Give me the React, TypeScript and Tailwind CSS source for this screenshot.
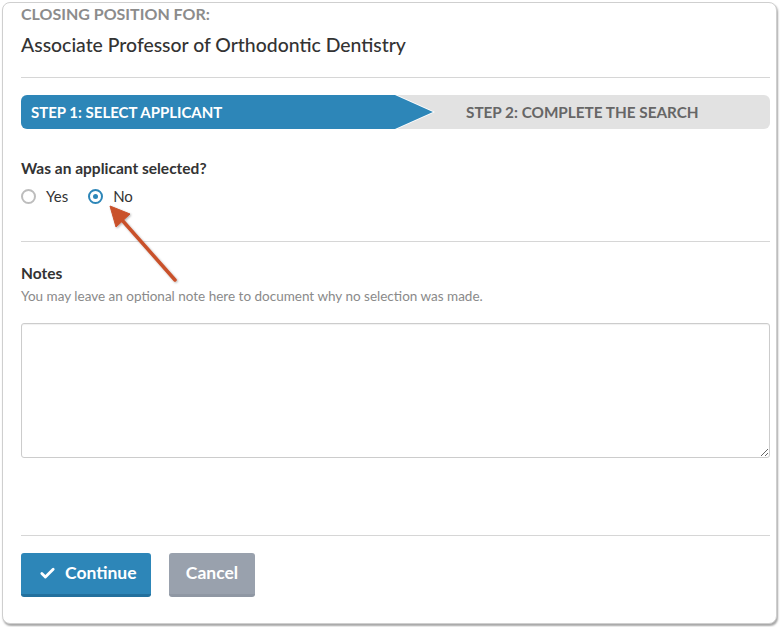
import { Check } from 'lucide-react';

export default function App() {
  return (
    <div className="relative w-[780px] h-[627px] bg-white font-['Lato','Open_Sans',sans-serif]">
      <div className="absolute left-[2px] top-[2px] w-[775px] h-[622px] rounded-lg border border-[#cfcfcf] shadow-[1px_2px_2px_rgba(0,0,0,0.35)] bg-white" />
      <div className="relative pl-[21px] pr-[10px] pt-[4px]">
        <p className="text-[16px] leading-[20px] font-bold text-[#8c8c8c] uppercase">Closing position for:</p>
        <h1 className="mt-[9px] text-[19.4px] leading-[24px] font-medium text-[#333]">Associate Professor of Orthodontic Dentistry</h1>
        <div className="mt-[20px] h-px bg-[#d6d6d6]" />

        {/* Steps */}
        <div className="mt-[17px] flex h-[34px] rounded-md bg-[#e2e2e2] overflow-hidden">
          <div className="relative w-[414px] h-full">
            <div className="absolute inset-0 bg-white [clip-path:polygon(0_0,calc(100%-38px)_0,100%_50%,calc(100%-38px)_100%,0_100%)]" />
            <div className="absolute inset-y-0 left-0 right-[2px] bg-[#2d86b8] [clip-path:polygon(0_0,calc(100%-38px)_0,100%_50%,calc(100%-38px)_100%,0_100%)] flex items-center pl-[10px]">
              <span className="text-[15px] font-bold text-white uppercase">Step 1: Select applicant</span>
            </div>
          </div>
          <div className="flex items-center pl-[31px]">
            <span className="text-[15.3px] font-bold text-[#666] uppercase">Step 2: Complete the search</span>
          </div>
        </div>

        <p className="mt-[29px] text-[15.5px] leading-[20px] font-bold text-[#333]">Was an applicant selected?</p>
        <div className="mt-[8px] flex items-center h-[20px] text-[15px] text-[#333]">
          <span className="w-[15px] h-[15px] rounded-full border-[2.5px] border-[#bdbdbd] bg-white" />
          <span className="ml-[10px]">Yes</span>
          <span className="ml-[20px] w-[15px] h-[15px] rounded-full border-[2.5px] border-[#2d86b8] bg-white flex items-center justify-center">
            <span className="w-[5px] h-[5px] rounded-full bg-[#2d86b8]" />
          </span>
          <span className="ml-[10px]">No</span>
        </div>
        <div className="mt-[35px] h-px bg-[#d6d6d6]" />

        <p className="mt-[21px] text-[15.5px] leading-[20px] font-bold text-[#333]">Notes</p>
        <p className="mt-[5px] text-[13.5px] leading-[16px] text-[#8a8a8a]">You may leave an optional note here to document why no selection was made.</p>
        <textarea className="mt-[19px] block w-full h-[135px] rounded-[3px] border border-[#cccccc] shadow-[inset_0_1px_1px_rgba(0,0,0,0.06)] resize-y outline-none" />

        <div className="mt-[77px] h-px bg-[#d6d6d6]" />
        <div className="mt-[17px] flex gap-[18px]">
          <button className="flex items-center gap-[9px] h-[44px] w-[130px] pl-[18px] rounded-[3px] bg-[#2d86b8] border-b-[3px] border-[#23709d] text-white text-[17.5px] font-bold">
            <Check size={17} strokeWidth={4} />
            Continue
          </button>
          <button className="h-[44px] w-[86px] rounded-[3px] bg-[#99a1ad] border-b-[3px] border-[#8f97a3] text-white text-[17.5px] font-bold">
            Cancel
          </button>
        </div>
      </div>

      <svg className="absolute left-0 top-0 pointer-events-none" width="780" height="627">
        <defs>
          <filter id="sh" x="-20%" y="-20%" width="140%" height="140%">
            <feDropShadow dx="1" dy="1" stdDeviation="1" floodColor="#000" floodOpacity="0.3" />
          </filter>
        </defs>
        <g filter="url(#sh)" fill="#c9512c" stroke="#c9512c">
          <line x1="175" y1="280" x2="122" y2="220" strokeWidth="3.5" strokeLinecap="round" />
          <polygon points="110,206 130,214 116,227" strokeWidth="1" strokeLinejoin="round" />
        </g>
      </svg>
    </div>
  );
}
